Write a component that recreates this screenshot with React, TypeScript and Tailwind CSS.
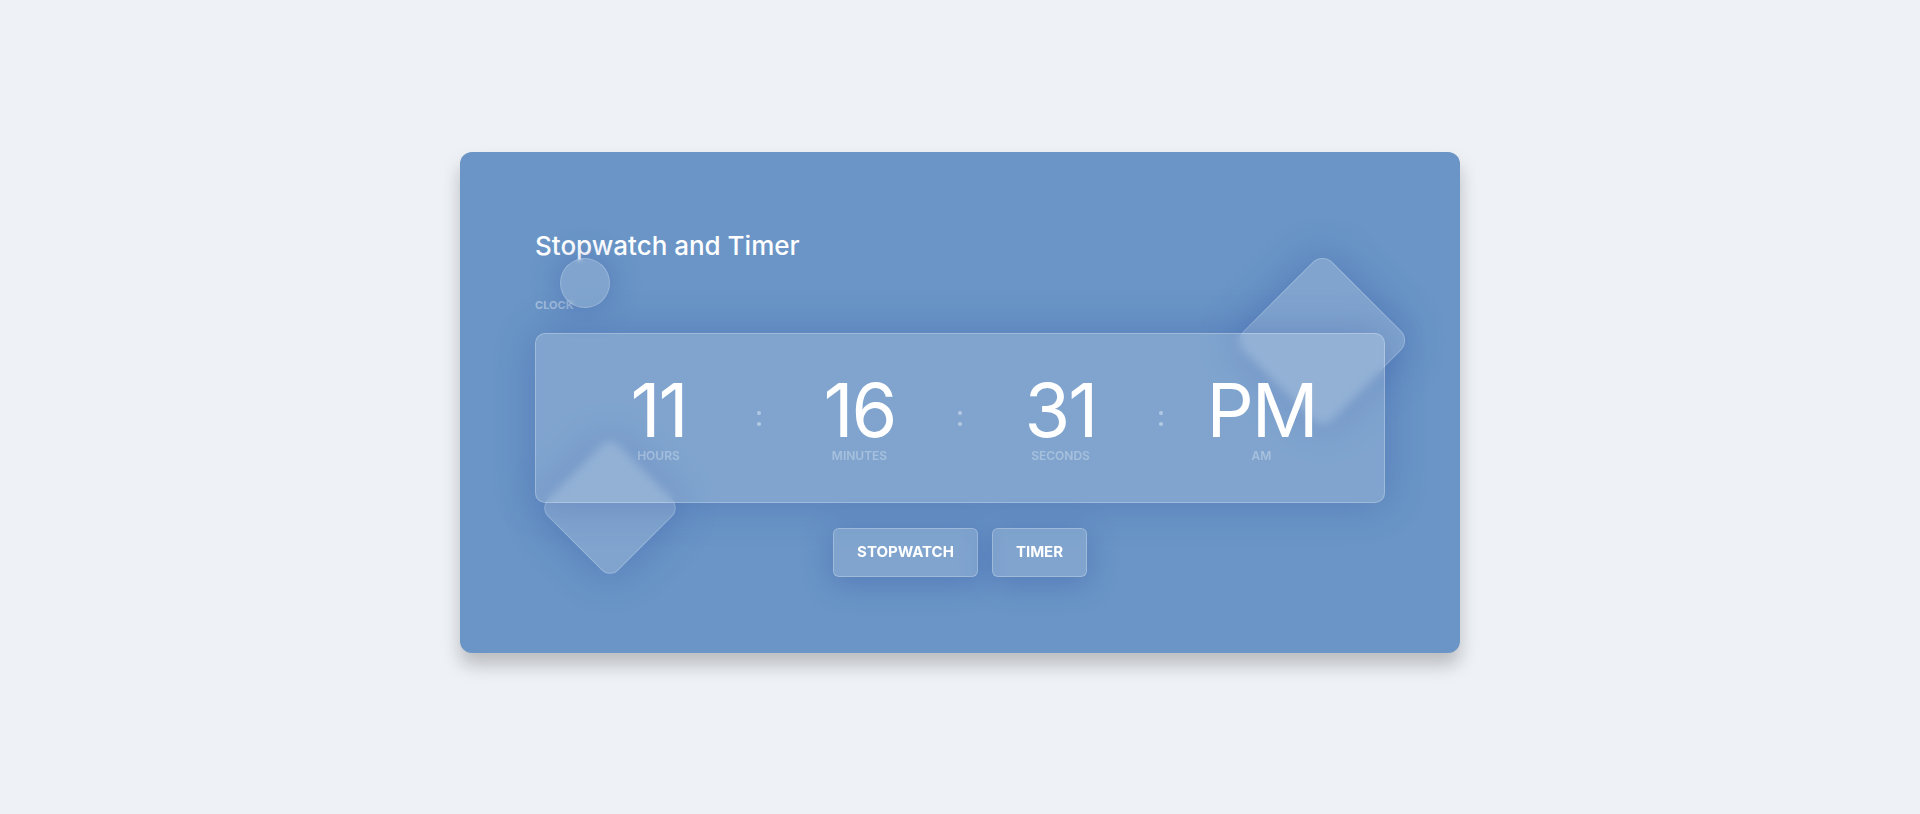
const units = [
  { value: "11", label: "HOURS" },
  { value: "16", label: "MINUTES" },
  { value: "31", label: "SECONDS" },
  { value: "PM", label: "AM" },
];

function Colon() {
  return (
    <div className="flex w-[41px] flex-col items-center gap-[7px] pt-[38px]">
      <span className="h-[4px] w-[4px] rounded-full bg-white/40" />
      <span className="h-[4px] w-[4px] rounded-full bg-white/40" />
    </div>
  );
}

export default function App() {
  return (
    <div
      className="min-h-[814px] w-full bg-[#eef1f6] pt-[152px]"
      style={{ fontFamily: "Inter, 'Open Sans', sans-serif" }}
    >
      <div className="relative mx-auto h-[501px] w-[1000px] overflow-hidden rounded-[12px] bg-[#6a95c6] px-[75px] pt-[74px] shadow-[0_12px_18px_rgba(0,0,0,0.22)]">
        {/* floating glass shapes */}
        <div className="absolute left-[800px] top-[126px] h-[125px] w-[125px] rotate-45 rounded-[14px] border border-white/20 bg-white/15 shadow-[0_0_40px_rgba(40,70,160,0.35)]" />
        <div className="absolute left-[100px] top-[306px] h-[100px] w-[100px] rotate-45 rounded-[12px] border border-white/20 bg-white/15 shadow-[0_0_40px_rgba(40,70,160,0.35)]" />

        <h1 className="relative text-[26px] font-medium leading-[39px] text-white">Stopwatch and Timer</h1>
        <p className="relative mt-[32px] text-[11px] font-bold leading-[16px] text-white/40">CLOCK</p>

        <div className="absolute left-[100px] top-[106px] z-20 h-[50px] w-[50px] rounded-full border border-white/20 bg-white/15 shadow-[0_0_30px_rgba(40,70,160,0.35)] backdrop-blur-[2px]" />

        <div className="relative z-10 mt-[20px] flex h-[170px] w-[850px] items-start justify-center rounded-[10px] border border-white/25 bg-white/15 pt-[39px] shadow-[0_0_40px_rgba(40,70,160,0.3)] backdrop-blur-[5px]">
          {units.map((u, i) => (
            <div key={u.label} className="flex items-start">
              {i > 0 && <Colon />}
              <div className="flex w-[160px] flex-col items-center">
                <span className="text-[74px] font-normal leading-[74px] tracking-[-2px] text-white">{u.value}</span>
                <span className="mt-[2px] text-[12px] font-semibold leading-[14px] text-white/30">{u.label}</span>
              </div>
            </div>
          ))}
        </div>

        <div className="relative z-10 mt-[25px] flex justify-center gap-[14px]">
          <button className="h-[49px] w-[145px] rounded-[6px] border border-white/25 bg-white/15 text-[15px] font-bold text-white shadow-[0_5px_30px_rgba(40,70,160,0.35)]">
            STOPWATCH
          </button>
          <button className="h-[49px] w-[95px] rounded-[6px] border border-white/25 bg-white/15 text-[15px] font-bold text-white shadow-[0_5px_30px_rgba(40,70,160,0.35)]">
            TIMER
          </button>
        </div>
      </div>
    </div>
  );
}
